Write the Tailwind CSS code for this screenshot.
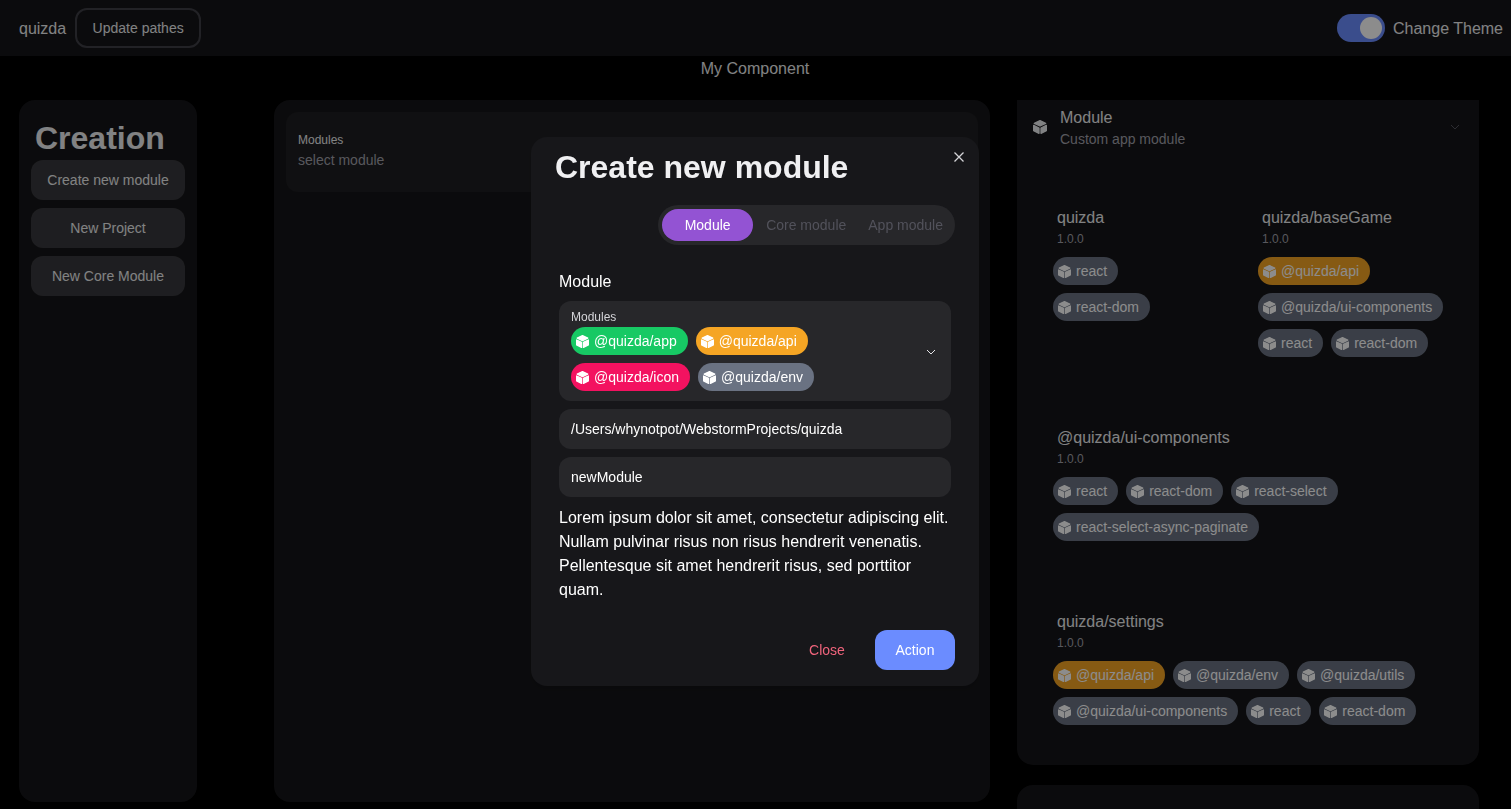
<!DOCTYPE html>
<html lang="en">
<head>
    <meta charset="UTF-8">
    <meta name="viewport" content="width=device-width, initial-scale=1.0">
    <title>quizda</title>
    <script src="https://cdn.jsdelivr.net/npm/@tailwindcss/browser@4"></script>
</head>
<body class="bg-black text-[#ecedee] font-['Liberation_Sans',sans-serif] h-[809px] overflow-hidden">
    <!-- Shared cube icon -->
    <svg class="hidden">
        <symbol id="cube" viewBox="1.5 1.5 21 21">
            <path d="M12 2.5 20.5 6.5 12 10.5 3.5 6.5Z" fill="currentColor" stroke="currentColor" stroke-width="2" stroke-linejoin="round"/>
            <path d="M2.5 9.5 10.5 13.5V21.5L2.5 17.5Z" fill="currentColor" stroke="currentColor" stroke-width="2" stroke-linejoin="round"/>
            <path d="M21.5 9.5 13.5 13.5V21.5L21.5 17.5Z" fill="currentColor" stroke="currentColor" stroke-width="2" stroke-linejoin="round"/>
        </symbol>
    </svg>

    <!-- Navbar -->
    <nav class="h-14 bg-[#151518] pl-[19px] pr-[8px] flex items-center justify-between">
        <div class="flex items-center gap-[9px]">
            <span class="text-base pt-0.5">quizda</span>
            <button class="h-10 w-[126px] border-2 border-[#3f3f46] rounded-xl text-sm">Update pathes</button>
        </div>
        <div class="flex items-center gap-2">
            <div class="w-12 h-7 rounded-full bg-[#6b8cff] flex items-center justify-end pr-[3px]">
                <div class="w-[22px] h-[22px] rounded-full bg-white"></div>
            </div>
            <span class="text-base pt-0.5">Change Theme</span>
        </div>
    </nav>

    <p class="h-6 text-center text-base leading-[26px] pr-px">My Component</p>

    <main class="flex items-start pl-[19px] pt-5">
        <!-- Creation sidebar -->
        <aside class="w-[178px] h-[702px] mr-[77px] bg-[#151518] rounded-2xl px-3 pt-[18px]">
            <h1 class="pl-1 text-[32px] font-bold leading-10 mb-0.5">Creation</h1>
            <div class="flex flex-col gap-2">
                <button class="h-10 rounded-xl bg-[#38383c] text-sm">Create new module</button>
                <button class="h-10 rounded-xl bg-[#38383c] text-sm">New Project</button>
                <button class="h-10 rounded-xl bg-[#38383c] text-sm">New Core Module</button>
            </div>
        </aside>

        <!-- Module picker -->
        <section class="w-[716px] h-[702px] mr-[27px] bg-[#151518] rounded-2xl p-3">
            <div class="h-[80px] rounded-xl bg-[#1e1e21] px-3 pt-[20px]">
                <p class="text-xs leading-4">Modules</p>
                <p class="text-sm leading-5 mt-0.5 text-[#a1a1aa]">select module</p>
            </div>
        </section>

        <!-- Module list -->
        <div class="w-[462px] flex flex-col gap-5">
            <section class="h-[665px] bg-[#151518] rounded-b-2xl">
                <div class="h-[77px] pl-4 pr-[18px] pt-[5px] flex items-start">
                    <svg class="w-[14px] h-[14px] mt-[15px] mr-[13px] text-[#ecedee]"><use href="#cube"/></svg>
                    <div class="flex-1">
                        <p class="h-6 text-base leading-[26px]">Module</p>
                        <p class="text-sm leading-5 text-[#a1a1aa]">Custom app module</p>
                    </div>
                    <svg class="w-3 h-3 mt-4 text-[#52525b]" viewBox="0 0 24 24" fill="none" stroke="currentColor" stroke-width="2"><path d="m4 8 8 8 8-8"/></svg>
                </div>

                <div class="ml-6 w-[414px] grid grid-cols-[205px_209px]">
                    <div class="pl-3 pr-14 pt-7 pb-10">
                        <p class="pl-1 h-6 text-base leading-[26px]">quizda</p>
                        <p class="pl-1 mt-0.5 text-xs leading-4 text-[#a1a1aa]">1.0.0</p>
                        <div class="mt-2.5 flex flex-wrap gap-2 text-sm">
                            <span class="h-7 pl-[5px] pr-[11px] rounded-full bg-gray-500 text-white inline-flex items-center gap-[5px]"><svg class="w-[13px] h-[13px]"><use href="#cube"/></svg>react</span>
                            <span class="h-7 pl-[5px] pr-[11px] rounded-full bg-gray-500 text-white inline-flex items-center gap-[5px]"><svg class="w-[13px] h-[13px]"><use href="#cube"/></svg>react-dom</span>
                        </div>
                    </div>
                    <div class="pl-3 pt-7 pb-10">
                        <p class="pl-1 h-6 text-base leading-[26px]">quizda/baseGame</p>
                        <p class="pl-1 mt-0.5 text-xs leading-4 text-[#a1a1aa]">1.0.0</p>
                        <div class="mt-2.5 flex flex-wrap gap-2 text-sm">
                            <span class="h-7 pl-[5px] pr-[11px] rounded-full bg-[#f5a524] text-white inline-flex items-center gap-[5px]"><svg class="w-[13px] h-[13px]"><use href="#cube"/></svg>@quizda/api</span>
                            <span class="h-7 pl-[5px] pr-[11px] rounded-full bg-gray-500 text-white inline-flex items-center gap-[5px]"><svg class="w-[13px] h-[13px]"><use href="#cube"/></svg>@quizda/ui-components</span>
                            <span class="h-7 pl-[5px] pr-[11px] rounded-full bg-gray-500 text-white inline-flex items-center gap-[5px]"><svg class="w-[13px] h-[13px]"><use href="#cube"/></svg>react</span>
                            <span class="h-7 pl-[5px] pr-[11px] rounded-full bg-gray-500 text-white inline-flex items-center gap-[5px]"><svg class="w-[13px] h-[13px]"><use href="#cube"/></svg>react-dom</span>
                        </div>
                    </div>
                    <div class="col-span-2 pl-3 pb-10 pt-7">
                        <p class="pl-1 h-6 text-base leading-[26px]">@quizda/ui-components</p>
                        <p class="pl-1 mt-0.5 text-xs leading-4 text-[#a1a1aa]">1.0.0</p>
                        <div class="mt-2.5 flex flex-wrap gap-2 text-sm">
                            <span class="h-7 pl-[5px] pr-[11px] rounded-full bg-gray-500 text-white inline-flex items-center gap-[5px]"><svg class="w-[13px] h-[13px]"><use href="#cube"/></svg>react</span>
                            <span class="h-7 pl-[5px] pr-[11px] rounded-full bg-gray-500 text-white inline-flex items-center gap-[5px]"><svg class="w-[13px] h-[13px]"><use href="#cube"/></svg>react-dom</span>
                            <span class="h-7 pl-[5px] pr-[11px] rounded-full bg-gray-500 text-white inline-flex items-center gap-[5px]"><svg class="w-[13px] h-[13px]"><use href="#cube"/></svg>react-select</span>
                            <span class="h-7 pl-[5px] pr-[11px] rounded-full bg-gray-500 text-white inline-flex items-center gap-[5px]"><svg class="w-[13px] h-[13px]"><use href="#cube"/></svg>react-select-async-paginate</span>
                        </div>
                    </div>
                    <div class="col-span-2 pl-3 pt-7">
                        <p class="pl-1 h-6 text-base leading-[26px]">quizda/settings</p>
                        <p class="pl-1 mt-0.5 text-xs leading-4 text-[#a1a1aa]">1.0.0</p>
                        <div class="mt-2.5 flex flex-wrap gap-2 text-sm">
                            <span class="h-7 pl-[5px] pr-[11px] rounded-full bg-[#f5a524] text-white inline-flex items-center gap-[5px]"><svg class="w-[13px] h-[13px]"><use href="#cube"/></svg>@quizda/api</span>
                            <span class="h-7 pl-[5px] pr-[11px] rounded-full bg-gray-500 text-white inline-flex items-center gap-[5px]"><svg class="w-[13px] h-[13px]"><use href="#cube"/></svg>@quizda/env</span>
                            <span class="h-7 pl-[5px] pr-[11px] rounded-full bg-gray-500 text-white inline-flex items-center gap-[5px]"><svg class="w-[13px] h-[13px]"><use href="#cube"/></svg>@quizda/utils</span>
                            <span class="h-7 pl-[5px] pr-[11px] rounded-full bg-gray-500 text-white inline-flex items-center gap-[5px]"><svg class="w-[13px] h-[13px]"><use href="#cube"/></svg>@quizda/ui-components</span>
                            <span class="h-7 pl-[5px] pr-[11px] rounded-full bg-gray-500 text-white inline-flex items-center gap-[5px]"><svg class="w-[13px] h-[13px]"><use href="#cube"/></svg>react</span>
                            <span class="h-7 pl-[5px] pr-[11px] rounded-full bg-gray-500 text-white inline-flex items-center gap-[5px]"><svg class="w-[13px] h-[13px]"><use href="#cube"/></svg>react-dom</span>
                        </div>
                    </div>
                </div>
            </section>
            <section class="h-6 bg-[#151518] rounded-t-2xl"></section>
        </div>
    </main>

    <!-- Backdrop and modal -->
    <div class="fixed inset-0 bg-black/45 flex justify-center items-start pt-[137px] pr-px">
        <div class="relative w-[448px] h-[549px] bg-[#17171a] rounded-2xl shadow-md text-white">
            <button class="absolute top-3 right-3 w-[16px] h-[16px] text-[#d4d4d8]">
                <svg viewBox="0 0 16 16" fill="none" stroke="currentColor" stroke-width="1.3" class="w-4 h-4"><path d="m3.5 3.5 9 9m0-9-9 9"/></svg>
            </button>
            <h2 class="pl-6 pt-4 text-[32px] leading-7 font-bold text-[#f0f0f2]">Create new module</h2>

            <div class="px-7 pt-6">
                <div class="flex justify-end -mr-1">
                    <div class="h-10 rounded-full bg-[#27272a] p-1 pr-3 flex items-center text-sm text-[#52525b]">
                        <span class="w-[91px] h-8 rounded-full bg-[#9353d3] text-white flex items-center justify-center">Module</span>
                        <span class="ml-[13px]">Core module</span>
                        <span class="ml-[22px]">App module</span>
                    </div>
                </div>

                <p class="mt-6 h-6 text-base leading-[26px]">Module</p>

                <div class="mt-2 h-[100px] rounded-xl bg-[#27272a] pl-3 pr-[14px] pb-[2px] flex items-center justify-between">
                    <div>
                        <p class="text-xs leading-4 text-[#d4d4d8]">Modules</p>
                        <div class="mt-[2px] flex flex-wrap gap-2 text-sm w-[300px]">
                            <span class="h-7 pl-[5px] pr-[11px] rounded-full bg-[#17c964] inline-flex items-center gap-[5px]"><svg class="w-[13px] h-[13px]"><use href="#cube"/></svg>@quizda/app</span>
                            <span class="h-7 pl-[5px] pr-[11px] rounded-full bg-[#f5a524] inline-flex items-center gap-[5px]"><svg class="w-[13px] h-[13px]"><use href="#cube"/></svg>@quizda/api</span>
                            <span class="h-7 pl-[5px] pr-[11px] rounded-full bg-[#f31260] inline-flex items-center gap-[5px]"><svg class="w-[13px] h-[13px]"><use href="#cube"/></svg>@quizda/icon</span>
                            <span class="h-7 pl-[5px] pr-[11px] rounded-full bg-gray-500 inline-flex items-center gap-[5px]"><svg class="w-[13px] h-[13px]"><use href="#cube"/></svg>@quizda/env</span>
                        </div>
                    </div>
                    <svg class="w-3 h-3 text-[#e4e4e7] mt-[4px]" viewBox="0 0 24 24" fill="none" stroke="currentColor" stroke-width="2"><path d="m4 8 8 8 8-8"/></svg>
                </div>

                <div class="mt-2 h-10 rounded-xl bg-[#27272a] px-3 flex items-center text-sm">/Users/whynotpot/WebstormProjects/quizda</div>
                <div class="mt-2 h-10 rounded-xl bg-[#27272a] px-3 flex items-center text-sm">newModule</div>

                <p class="mt-[9px] text-base leading-6">Lorem ipsum dolor sit amet, consectetur adipiscing elit. Nullam pulvinar risus non risus hendrerit venenatis. Pellentesque sit amet hendrerit risus, sed porttitor quam.</p>
            </div>

            <div class="absolute bottom-4 right-6 flex gap-2 text-sm">
                <button class="w-20 h-10 rounded-xl text-[#f0647c]">Close</button>
                <button class="w-20 h-10 rounded-xl bg-[#6b8cff] text-white">Action</button>
            </div>
        </div>
    </div>
</body>
</html>
